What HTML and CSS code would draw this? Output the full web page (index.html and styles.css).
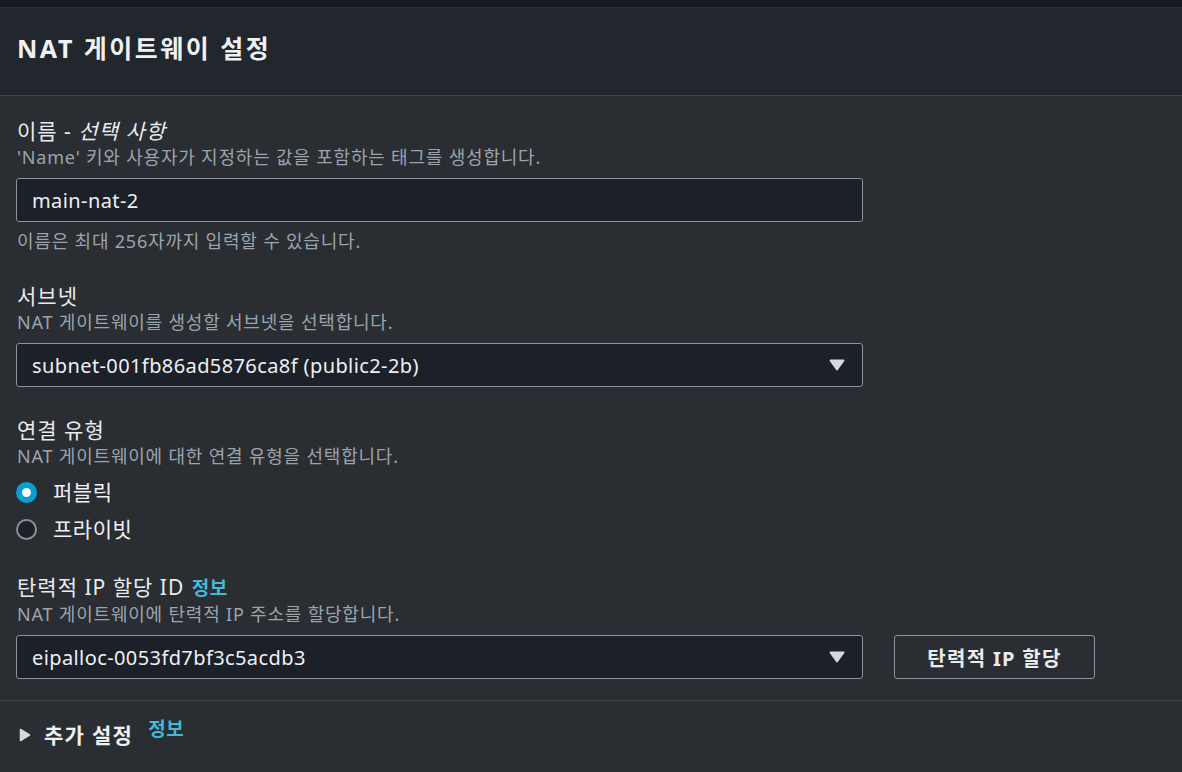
FILE: index.html
```html
<!DOCTYPE html>
<html lang="ko">
<head>
<meta charset="utf-8">
<link rel="stylesheet" href="styles.css">
</head>
<body>
<div class="topstrip"></div>
<div class="panel">
  <div class="panel-header">
    <h2 class="title">NAT 게이트웨이 설정</h2>
  </div>
  <div class="panel-body">
    <div class="field">
      <div class="label">이름 - <i>선택 사항</i></div>
      <div class="desc">'Name' 키와 사용자가 지정하는 값을 포함하는 태그를 생성합니다.</div>
      <div class="control input"><span>main-nat-2</span></div>
      <div class="constraint">이름은 최대 256자까지 입력할 수 있습니다.</div>
    </div>
    <div class="field">
      <div class="label">서브넷</div>
      <div class="desc">NAT 게이트웨이를 생성할 서브넷을 선택합니다.</div>
      <div class="control select"><span>subnet-001fb86ad5876ca8f (public2-2b)</span><svg class="caret" width="16" height="12" viewBox="0 0 16 12"><path d="M1.5 1.5h13L8 10.5z" fill="#d5d9dc" stroke="#d5d9dc" stroke-width="2" stroke-linejoin="round"/></svg></div>
    </div>
    <div class="field">
      <div class="label">연결 유형</div>
      <div class="desc">NAT 게이트웨이에 대한 연결 유형을 선택합니다.</div>
      <div class="radios">
        <div class="radio"><span class="dot on"></span><span>퍼블릭</span></div>
        <div class="radio"><span class="dot"></span><span>프라이빗</span></div>
      </div>
    </div>
    <div class="field">
      <div class="label">탄력적 IP 할당 ID <a class="info">정보</a></div>
      <div class="desc">NAT 게이트웨이에 탄력적 IP 주소를 할당합니다.</div>
      <div class="row">
        <div class="control select"><span>eipalloc-0053fd7bf3c5acdb3</span><svg class="caret" width="16" height="12" viewBox="0 0 16 12"><path d="M1.5 1.5h13L8 10.5z" fill="#d5d9dc" stroke="#d5d9dc" stroke-width="2" stroke-linejoin="round"/></svg></div>
        <button class="btn">탄력적 IP 할당</button>
      </div>
    </div>
  </div>
  <div class="expander">
    <svg class="tri" width="12" height="14" viewBox="0 0 12 14"><path d="M1.5 1.5v11l9-5.5z" fill="#d5d9dc" stroke="#d5d9dc" stroke-width="1.5" stroke-linejoin="round"/></svg>
    <span class="exp-title">추가 설정</span>
    <a class="info sup">정보</a>
  </div>
</div>
</body>
</html>
```
FILE: styles.css
```css
html, body {
  margin: 0;
  padding: 0;
  background: #2a2d32;
  font-family: "Noto Sans", "Noto Sans CJK KR", sans-serif;
  color: #d5dbdb;
}
.topstrip {
  height: 7px;
  background: #161a21;
}
.panel {
  background: #2a2d32;
}
.panel-header {
  background: #22262d;
  height: 87px;
  border-top: 1px solid #2c3038;
  border-bottom: 1px solid #41464e;
  display: flex;
  align-items: center;
  padding-left: 17px;
}
.title {
  margin: 0;
  font-size: 25px;
  line-height: 32px;
  font-weight: 700;
  color: #eef0f2;
  letter-spacing: 2.5px;
  position: relative;
  top: -4px;
}
.panel-body {
  padding: 21px 16px 21px 16px;
  display: flex;
  flex-direction: column;
  gap: 29px;
}
.field {
  display: flex;
  flex-direction: column;
}
.label {
  font-size: 21px;
  line-height: 28px;
  color: #e9ebed;
  padding-left: 1px;
  letter-spacing: 1px;
}
.label i {
  font-style: italic;
}
.desc {
  font-size: 18px;
  line-height: 24px;
  color: #9aa4ad;
  padding-left: 1px;
  margin-top: 0;
  letter-spacing: 0.8px;
}
.constraint {
  font-size: 18px;
  line-height: 24px;
  color: #9aa4ad;
  margin-top: 7px;
  padding-left: 1px;
  letter-spacing: 0.8px;
}
.control {
  width: 847px;
  height: 44px;
  box-sizing: border-box;
  border: 1px solid #8a949c;
  border-radius: 3px;
  background: #1b2029;
  display: flex;
  align-items: center;
  padding: 0 17px 0 15px;
  font-size: 20px;
  letter-spacing: 0.4px;
  color: #eef0f2;
  margin-top: 9px;
}
.select {
  justify-content: space-between;
}
.caret {
  display: block;
}
.radios {
  display: flex;
  flex-direction: column;
  gap: 7px;
  margin-top: 9px;
}
.radio {
  display: flex;
  align-items: center;
  gap: 16px;
  font-size: 21px;
  letter-spacing: 0.5px;
  color: #eef0f2;
  line-height: 30px;
}
.dot {
  width: 21px;
  height: 21px;
  box-sizing: border-box;
  border-radius: 50%;
  border: 2px solid #879196;
  background: #1b2029;
}
.dot.on {
  border: 6px solid #0a9fce;
  background: #ffffff;
}
.info {
  color: #44b9d6;
  font-weight: 700;
  font-size: 19px;
  letter-spacing: 0.6px;
  margin-left: 1px;
}
.row {
  display: flex;
  align-items: flex-end;
  gap: 31px;
}
.btn {
  width: 201px;
  height: 44px;
  box-sizing: border-box;
  border: 1px solid #8a949c;
  border-radius: 3px;
  background: transparent;
  color: #e9ebed;
  font-family: "Noto Sans", "Noto Sans CJK KR", sans-serif;
  font-size: 20px;
  font-weight: 700;
  letter-spacing: 1.3px;
}
.expander {
  border-top: 1px solid #41464e;
  display: flex;
  align-items: center;
  padding: 21px 0 22px 19px;
  gap: 13px;
}
.exp-title {
  font-size: 21px;
  line-height: 26px;
  font-weight: 700;
  color: #eef0f2;
  letter-spacing: 1.3px;
}
.info.sup {
  margin-left: 2px;
  align-self: flex-start;
  margin-top: -6px;
  line-height: 26px;
}
```
